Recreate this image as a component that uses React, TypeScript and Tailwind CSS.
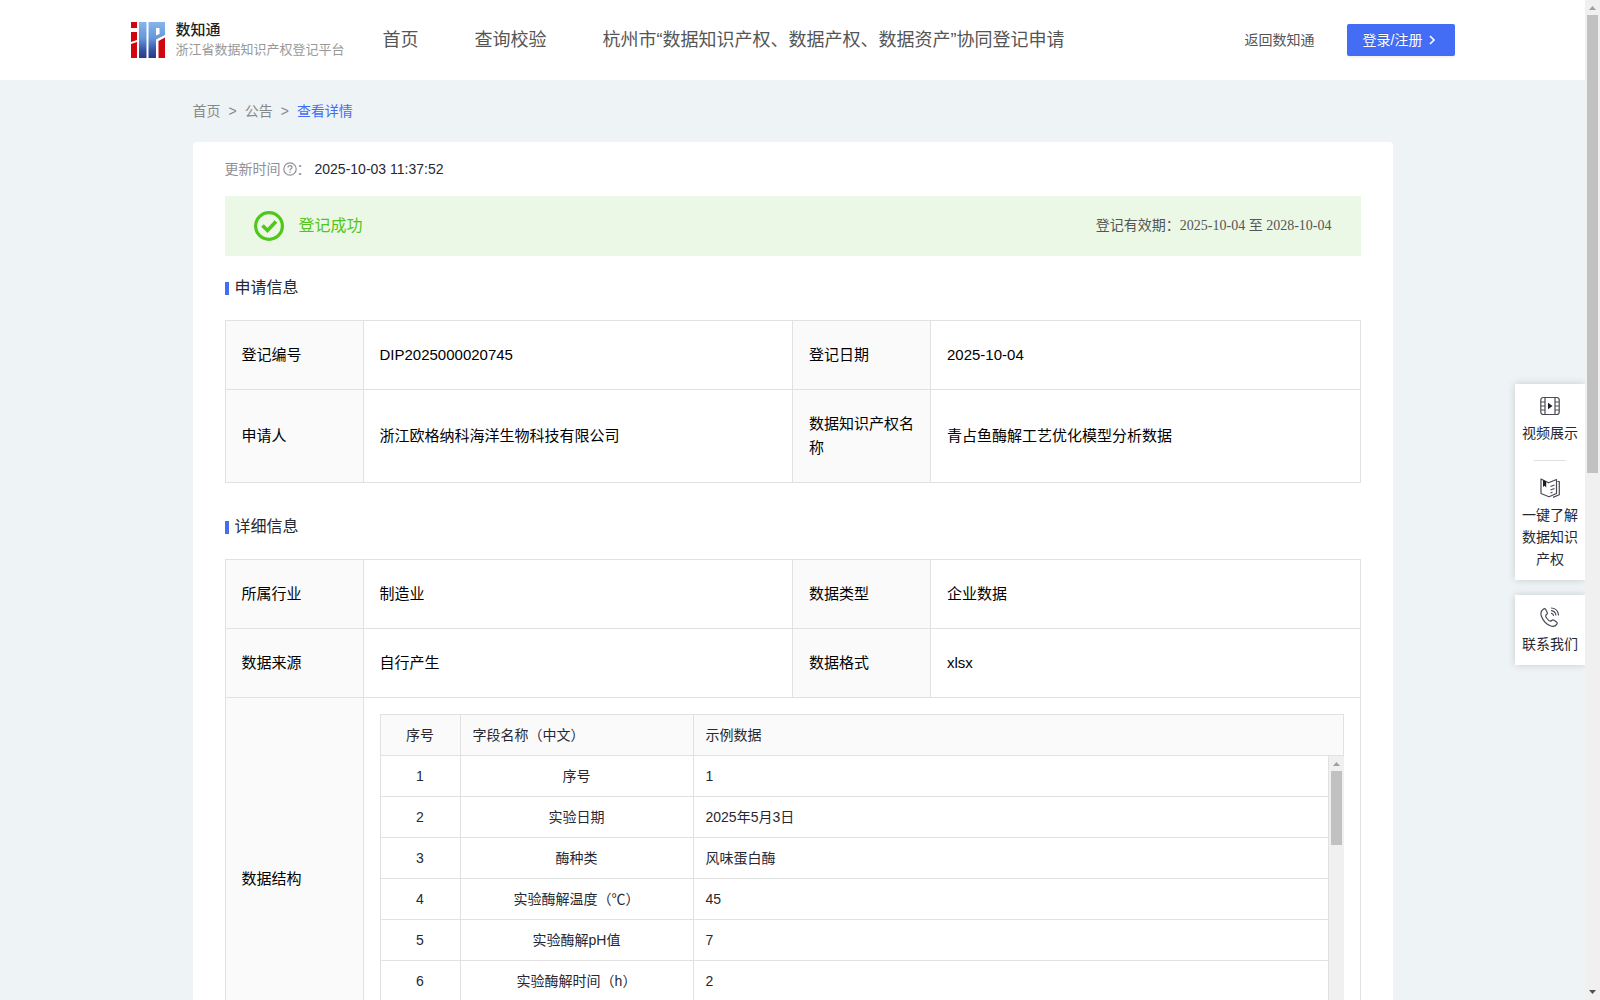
import { Fragment } from 'react';
import type { ReactNode } from 'react';
import clsx from 'clsx';

type Field = { label: string; value: string };

const NAV_LINKS = ['首页', '查询校验', '杭州市“数据知识产权、数据产权、数据资产”协同登记申请'];

const APPLY_ROWS: Field[][] = [
  [
    { label: '登记编号', value: 'DIP2025000020745' },
    { label: '登记日期', value: '2025-10-04' },
  ],
  [
    { label: '申请人', value: '浙江欧格纳科海洋生物科技有限公司' },
    { label: '数据知识产权名称', value: '青占鱼酶解工艺优化模型分析数据' },
  ],
];

const DETAIL_ROWS: Field[][] = [
  [
    { label: '所属行业', value: '制造业' },
    { label: '数据类型', value: '企业数据' },
  ],
  [
    { label: '数据来源', value: '自行产生' },
    { label: '数据格式', value: 'xlsx' },
  ],
];

const STRUCTURE = [
  { name: '序号', sample: '1' },
  { name: '实验日期', sample: '2025年5月3日' },
  { name: '酶种类', sample: '风味蛋白酶' },
  { name: '实验酶解温度（℃）', sample: '45' },
  { name: '实验酶解pH值', sample: '7' },
  { name: '实验酶解时间（h）', sample: '2' },
];

function Logo() {
  return (
    <svg width="34" height="36" viewBox="0 0 34 36" aria-hidden="true">
      <defs>
        <linearGradient id="logo-blue" x1="0" y1="0" x2="0" y2="36" gradientUnits="userSpaceOnUse">
          <stop offset="0" stopColor="#86b6ea" />
          <stop offset="0.45" stopColor="#6596d8" />
          <stop offset="0.8" stopColor="#3450a2" />
          <stop offset="1" stopColor="#283885" />
        </linearGradient>
      </defs>
      <path d="M0 0h6v6H0z" fill="#d0050f" />
      <path d="M0 10h6v8l-6 2z" fill="#d0050f" />
      <path d="M0 22l6-2v16H0z" fill="#d0050f" />
      <path d="M8 0h7.500v36H8z" fill="url(#logo-blue)" />
      <path d="M17.500 0H34v13l-9 4.500V36h-7.500z" fill="url(#logo-blue)" />
      <path d="M25 6h3.500v6L25 13.600z" fill="#fff" />
      <path d="M27.500 19l6.500-3.500V36h-6.500z" fill="#d0050f" />
    </svg>
  );
}

function FilmIcon() {
  return (
    <svg width="20" height="20" viewBox="0 0 20 20" fill="none" stroke="#4a4a54" strokeWidth="1.200" aria-hidden="true">
      <rect x="0.800" y="1.500" width="18.400" height="17" rx="2.500" />
      <path d="M5 2v16M15 2v16M1 6h4M1 10h4M1 14h4M15 6h4M15 10h4M15 14h4" />
      <path d="M8 6.800l4.500 3.200L8 13.200z" fill="#1c1c28" stroke="none" />
    </svg>
  );
}

function BookIcon() {
  return (
    <svg width="20" height="20" viewBox="0 0 20 20" fill="none" stroke="#4a4a54" strokeWidth="1.200" strokeLinejoin="round" aria-hidden="true">
      <path d="M8.500 4.800L1 1v14.500l8 3.200 7.500-3.200V1.500z" />
      <path d="M17.500 3.500h1.800v13.200L13 19.400" />
      <path d="M3 2v7l1.600-1.300L6.200 9.500V3.600z" fill="#1c1c28" stroke="none" />
      <path d="M10.500 8.500l4-1.500M10.500 12l4-1.500M10.500 15l2-.8" />
    </svg>
  );
}

function PhoneIcon() {
  return (
    <svg width="20" height="20" viewBox="0 0 20 20" fill="none" stroke="#4a4a54" strokeWidth="1.200" strokeLinecap="round" strokeLinejoin="round" aria-hidden="true">
      <path d="M3.200 2.200C1 3.800.4 6.500 1.500 9.500c1.600 4.200 4.800 7.600 8.800 9.300 2.700 1.100 5 .5 6.400-1.400.8-1.100.6-1.900-.5-2.700l-2.100-1.500c-1-.7-1.700-.5-2.500.3-.9 1-1.500 1-2.600.1C7.600 12.500 6.700 11.300 6 10c-.6-1.200-.5-1.700.5-2.400 1-.7 1.100-1.300.6-2.400l-1.200-2.400C5.200 1.500 4.400 1.400 3.200 2.200z" />
      <path d="M11.500 1c4 .3 6.600 3.200 7 7M11.500 3.700c2.500.3 4 2 4.400 4.300" />
      <path d="M11.500 6.300c1.100.3 1.800 1 2 2" />
    </svg>
  );
}

function ScrollTrack({ thumb, end = false }: { thumb: string; end?: boolean }) {
  return (
    <div className="flex w-[15px] shrink-0 flex-col bg-[#f0f0f0]" aria-hidden="true">
      <svg width="15" height="15" viewBox="0 0 15 15" className="shrink-0">
        <path d="M4 10l3.500-4 3.500 4z" fill="#a0a0a0" />
      </svg>
      <div className="min-h-0 flex-1 px-[2px]">
        <div className="bg-[#c1c1c1]" style={{ height: thumb }} />
      </div>
      {end && (
        <svg width="15" height="15" viewBox="0 0 15 15" className="shrink-0">
          <path d="M4 5h7l-3.500 4z" fill="#505050" />
        </svg>
      )}
    </div>
  );
}

function SectionTitle({ children }: { children: ReactNode }) {
  return (
    <h2 className="flex items-center gap-[6px] py-5 text-base leading-6 text-[#262833]">
      <span className="h-[13px] w-1 bg-[#446df6]" />
      {children}
    </h2>
  );
}

function InfoTable({ rows, children }: { rows: Field[][]; children?: ReactNode }) {
  return (
    <table className="w-full table-fixed border-collapse text-left text-[15px] leading-6 text-black">
      <colgroup>
        <col className="w-[138px]" />
        <col />
        <col className="w-[138px]" />
        <col />
      </colgroup>
      <tbody>
        {rows.map((row) => (
          <tr key={row[0].label}>
            {row.map((field) => (
              <Fragment key={field.label}>
                <th className="border border-[#e1e1e1] bg-[#fafafa] px-4 py-[22px] font-normal">{field.label}</th>
                <td className="border border-[#e1e1e1] px-4 py-[22px]">{field.value}</td>
              </Fragment>
            ))}
          </tr>
        ))}
        {children}
      </tbody>
    </table>
  );
}

const structureCell = 'border-r border-b border-[#e1e1e1] px-3 py-[9px]';

function StructureCols() {
  return (
    <colgroup>
      <col className="w-[80px]" />
      <col className="w-[233px]" />
      <col />
    </colgroup>
  );
}

function StructureTable() {
  return (
    <div className="border-t border-l border-[#e1e1e1] text-sm leading-[22px] text-[#262833]">
      <table className="w-full table-fixed border-separate border-spacing-0">
        <StructureCols />
        <thead>
          <tr className="bg-[#fafafa] text-left">
            <th className={clsx(structureCell, 'text-center font-normal')}>序号</th>
            <th className={clsx(structureCell, 'font-normal')}>字段名称（中文）</th>
            <th className={clsx(structureCell, 'font-normal')}>示例数据</th>
          </tr>
        </thead>
      </table>
      <div className="flex h-[287px] overflow-hidden">
        <div className="flex-1">
          <table className="w-full table-fixed border-separate border-spacing-0">
            <StructureCols />
            <tbody>
              {STRUCTURE.map((item, i) => (
                <tr key={item.name}>
                  <td className={clsx(structureCell, 'text-center')}>{i + 1}</td>
                  <td className={clsx(structureCell, 'text-center')}>{item.name}</td>
                  <td className={structureCell}>{item.sample}</td>
                </tr>
              ))}
            </tbody>
          </table>
        </div>
        <ScrollTrack thumb="27.2%" />
      </div>
    </div>
  );
}

function Header() {
  return (
    <header className="bg-white">
      <div className="mx-auto flex h-20 max-w-[1324px] items-center">
        <a href="#" className="flex items-center gap-[11px]">
          <Logo />
          <span className="flex flex-col">
            <span className="text-[15px] leading-5 font-medium text-[#1f1f1f]">数知通</span>
            <span className="text-[13px] leading-5 text-[#999]">浙江省数据知识产权登记平台</span>
          </span>
        </a>
        <nav className="ml-[38px] flex gap-14 text-lg text-[#555]">
          {NAV_LINKS.map((link) => (
            <a key={link} href="#">
              {link}
            </a>
          ))}
        </nav>
        <a href="#" className="ml-auto text-sm text-[#555]">
          返回数知通
        </a>
        <button
          type="button"
          className="ml-8 flex h-8 items-center gap-1 rounded-[2px] bg-[#446df6] px-4 text-sm text-white shadow-[0_2px_0_rgba(0,0,0,0.045)] [text-shadow:0_-1px_0_rgba(0,0,0,0.12)]"
        >
          登录/注册
          <svg width="12" height="12" viewBox="0 0 12 12" fill="none" stroke="currentColor" strokeWidth="1.600" aria-hidden="true">
            <path d="M3 2l4 4-4 4" />
          </svg>
        </button>
      </div>
    </header>
  );
}

function StatusBanner() {
  return (
    <div className="flex items-center bg-[#ebf8e6] px-[29px] py-[15px]">
      <svg width="30" height="30" viewBox="0 0 30 30" fill="none" stroke="#4fc71b" aria-hidden="true">
        <circle cx="15" cy="15" r="13.400" strokeWidth="3.200" />
        <path d="M8.500 14.500l5 5 8.500-9" strokeWidth="3.600" />
      </svg>
      <span className="ml-[15px] text-base text-[#52c41a]">登记成功</span>
      <span className="ml-auto font-['Liberation_Serif','Noto_Sans_CJK_SC',serif] text-sm text-[#555]">
        登记有效期：2025-10-04 至 2028-10-04
      </span>
    </div>
  );
}

function SideTools() {
  return (
    <aside className="absolute top-96 right-0 flex w-[70px] flex-col gap-[15px] text-center text-sm leading-[22px] text-[#262833]">
      <div className="bg-white px-[7px] pt-3 pb-[10px] shadow-[0_0_8px_rgba(0,0,0,0.16)]">
        <a href="#" className="flex flex-col items-center gap-[6px]">
          <FilmIcon />
          视频展示
        </a>
        <hr className="mx-auto mt-4 mb-[17px] w-8 border-[#e1e1e1]" />
        <a href="#" className="flex flex-col items-center gap-[6px]">
          <BookIcon />
          一键了解数据知识产权
        </a>
      </div>
      <div className="bg-white px-[7px] pt-3 pb-[10px] shadow-[0_0_8px_rgba(0,0,0,0.16)]">
        <a href="#" className="flex flex-col items-center gap-[6px]">
          <PhoneIcon />
          联系我们
        </a>
      </div>
    </aside>
  );
}

export default function App() {
  return (
    <div className="flex h-screen overflow-hidden bg-[#eef3f6] font-['Liberation_Sans','Noto_Sans_CJK_SC',sans-serif]">
      <div className="relative flex-1 overflow-hidden">
        <Header />

        <main className="mx-auto max-w-[1200px]">
          <nav className="flex gap-2 py-5 text-sm leading-[22px] text-[#888]">
            <a href="#">首页</a>
            <span>&gt;</span>
            <a href="#">公告</a>
            <span>&gt;</span>
            <a href="#" className="text-[#446df6]">
              查看详情
            </a>
          </nav>

          <div className="rounded-t-[4px] bg-white px-8 pb-8">
            <div className="flex items-center py-4 text-sm leading-[22px] text-[#909096]">
              更新时间
              <svg width="14" height="14" viewBox="0 0 14 14" fill="none" stroke="currentColor" strokeWidth="1.200" className="ml-[2px]" aria-hidden="true">
                <circle cx="7" cy="7" r="6.200" />
                <path d="M5 5.600c0-1.200.9-1.900 2-1.900s2 .7 2 1.800c0 1.300-2 1.400-2 2.900" />
                <path d="M7 9.400v1.300" />
              </svg>
              ：<span className="ml-1 text-[#262833]">2025-10-03 11:37:52</span>
            </div>
            <StatusBanner />

            <SectionTitle>申请信息</SectionTitle>
            <InfoTable rows={APPLY_ROWS} />

            <div className="mt-3">
              <SectionTitle>详细信息</SectionTitle>
            </div>
            <InfoTable rows={DETAIL_ROWS}>
              <tr>
                <th className="border border-[#e1e1e1] bg-[#fafafa] px-4 font-normal">数据结构</th>
                <td colSpan={3} className="border border-[#e1e1e1] p-4">
                  <StructureTable />
                </td>
              </tr>
            </InfoTable>
          </div>
        </main>

        <SideTools />
      </div>
      <ScrollTrack thumb="47.2%" end />
    </div>
  );
}
